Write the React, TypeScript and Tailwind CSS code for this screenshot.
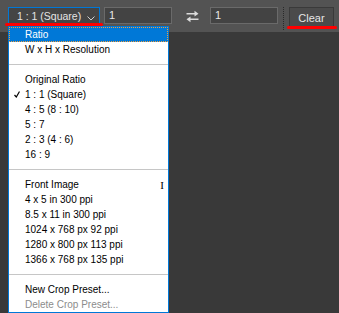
import React from "react";

type Item =
  | { kind: "item"; label: string; checked?: boolean; active?: boolean; disabled?: boolean; cursor?: boolean }
  | { kind: "sep" };

const items: Item[] = [
  { kind: "item", label: "Ratio", active: true },
  { kind: "item", label: "W x H x Resolution" },
  { kind: "sep" },
  { kind: "item", label: "Original Ratio" },
  { kind: "item", label: "1 : 1 (Square)", checked: true },
  { kind: "item", label: "4 : 5 (8 : 10)" },
  { kind: "item", label: "5 : 7" },
  { kind: "item", label: "2 : 3 (4 : 6)" },
  { kind: "item", label: "16 : 9" },
  { kind: "sep" },
  { kind: "item", label: "Front Image", cursor: true },
  { kind: "item", label: "4 x 5 in 300 ppi" },
  { kind: "item", label: "8.5 x 11 in 300 ppi" },
  { kind: "item", label: "1024 x 768 px 92 ppi" },
  { kind: "item", label: "1280 x 800 px 113 ppi" },
  { kind: "item", label: "1366 x 768 px 135 ppi" },
  { kind: "sep" },
  { kind: "item", label: "New Crop Preset..." },
  { kind: "item", label: "Delete Crop Preset...", disabled: true },
];

const SwapIcon = () => (
  <svg width="15" height="13" viewBox="0 0 15 13" fill="#dcdcdc">
    <path d="M1.5 3h8V0.8l4 2.9-4 2.9V4.4h-8z" />
    <path d="M13.5 8.6h-8V6.4l-4 2.9 4 2.9V10h8z" />
  </svg>
);

const Check = () => (
  <svg width="6" height="7" viewBox="0 0 6 7" className="absolute left-[5px] top-[4px]">
    <path d="M0.5 4l1.8 2L5.5 0.5" stroke="#000" strokeWidth="1.2" fill="none" />
  </svg>
);

const Menu = () => (
  <div className="absolute left-[8px] top-[26px] w-[161px] border border-[#0078d7] bg-white">
    {items.map((it, i) =>
      it.kind === "sep" ? (
        <div key={i} className="h-[15px] flex items-center">
          <div className="h-px w-full bg-[#c6c6c6]" />
        </div>
      ) : (
        <div
          key={i}
          className={
            it.active
              ? "relative h-[15px] pl-[16px] flex items-center bg-[#0078d7] text-white outline-1 outline-dotted outline-offset-[-1px] outline-[#f0a040]"
              : it.disabled
              ? "relative h-[15px] pl-[16px] flex items-center text-[#8c8c8c]"
              : "relative h-[15px] pl-[16px] flex items-center text-black"
          }
        >
          {it.checked && <Check />}
          {it.label}
          {it.cursor && (
            <span className="absolute right-[4px] top-0 text-[11px] font-['Liberation_Serif',serif] text-black">
              I
            </span>
          )}
        </div>
      )
    )}
  </div>
);

export default function App() {
  return (
    <div className="relative w-[339px] h-[313px] bg-[#393939] overflow-hidden font-['Liberation_Sans',Arial,sans-serif] text-[10px]">
      <div className="h-[32px] bg-[#535353] flex items-start pt-[7px] pl-[8px]">
        <div className="relative w-[92px] h-[19px] border border-[#0078d7] bg-[#454545] text-[#e4e4e4] text-[10.5px] flex items-center pl-[8px]">
          <span>1 : 1 (Square)</span>
          <svg width="8" height="5" viewBox="0 0 8 5" className="absolute right-[4px] top-[8px]">
            <path d="M0.5 0.5L4 4L7.5 0.5" stroke="#cfcfcf" strokeWidth="1" fill="none" />
          </svg>
          <div className="absolute left-[-4px] top-[15px] w-[98px] h-[3px] rounded-full bg-[#ff0000]" />
        </div>
        <div className="ml-[4px] w-[68px] h-[17px] border border-[#6a6a6a] bg-[#434343] text-[#e8e8e8] text-[11px] flex items-center pl-[4px]">
          1
        </div>
        <div className="ml-[13px] mt-[3px]">
          <SwapIcon />
        </div>
        <div className="ml-[10px] w-[68px] h-[17px] border border-[#6a6a6a] bg-[#434343] text-[#e8e8e8] text-[11px] flex items-center pl-[4px]">
          1
        </div>
        <div className="ml-[5px] h-[23px] border-l border-dotted border-[#2a2a2a]" />
        <div className="relative ml-[5px] w-[45px] h-[22px] border border-[#3a3a3a] bg-[#4b4b4b] text-[#e6e6e6] text-[11px] flex items-center justify-center">
          Clear
          <div className="absolute left-[-3px] top-[18px] w-[50px] h-[3px] rounded-full bg-[#ff0000]" />
        </div>
      </div>
      <Menu />
    </div>
  );
}
